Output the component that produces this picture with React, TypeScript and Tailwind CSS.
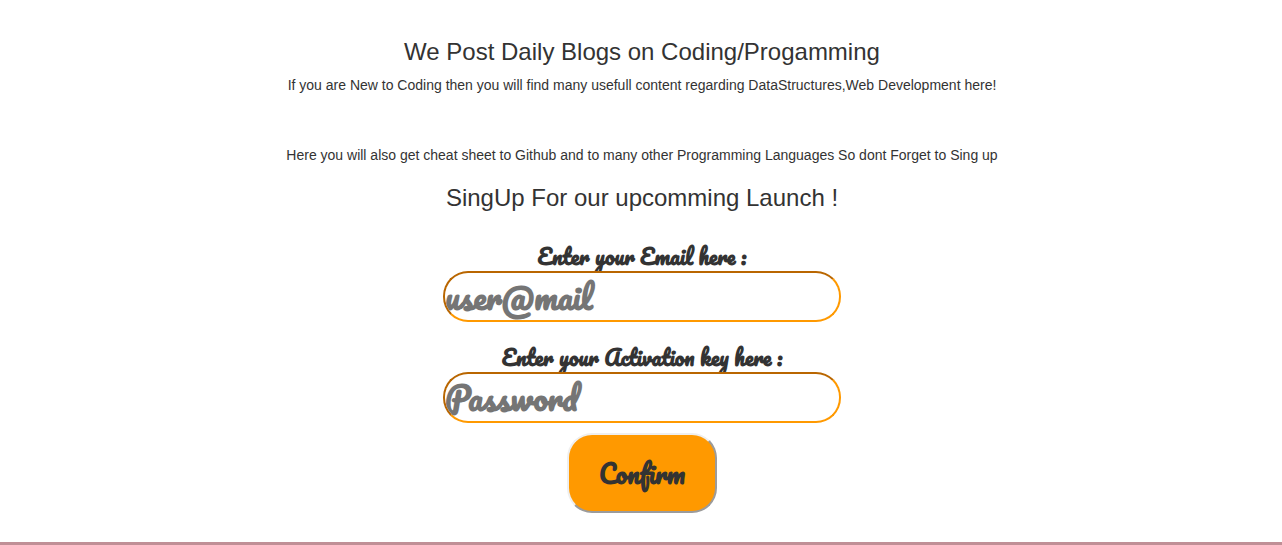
const script = "font-[Pacifico,Lato,sans-serif] font-bold";

const fieldClass =
  "h-[51px] w-full rounded-[25px] border-2 border-t-[#b96600] border-l-[#b96600] border-r-[#ff9900] border-b-[#ff9900] bg-white pb-0.5 text-[32px] text-[#333333] outline-none placeholder:text-[#757575] placeholder:opacity-100";

type FieldProps = {
  id: string;
  label: string;
  type: string;
  placeholder: string;
};

function Field({ id, label, type, placeholder }: FieldProps) {
  return (
    <div className="flex w-full flex-col items-center">
      <label htmlFor={id} className={`${script} text-[21px] leading-7`}>
        {label}
      </label>
      <input id={id} type={type} placeholder={placeholder} className={`${script} ${fieldClass}`} />
    </div>
  );
}

export default function App() {
  return (
    <div className="bg-white font-['Liberation_Sans',Arial,sans-serif] text-sm leading-5 text-[#333333]">
      <main className="flex flex-col items-center pt-[39px] pb-[29px] pl-[2px] text-center">
        <h3 className="text-2xl leading-[26px]">We Post Daily Blogs on Coding/Progamming</h3>
        <p className="mt-[10px]">
          If you are New to Coding then you will find many usefull content regarding DataStructures,Web
          Development here!
        </p>
        <p className="mt-[50px]">
          Here you will also get cheat sheet to Github and to many other Programming Languages So dont Forget
          to Sing up
        </p>
        <h3 className="mt-5 text-2xl leading-[26px]">SingUp For our upcomming Launch !</h3>
        <form
          className="mt-8 flex w-full max-w-[398px] flex-col items-center"
          onSubmit={(event) => event.preventDefault()}
        >
          <div className="flex w-full flex-col gap-[22px]">
            <Field id="email" label="Enter your Email here :" type="email" placeholder="user@mail" />
            <Field id="key" label="Enter your Activation key here :" type="password" placeholder="Password" />
          </div>
          <button
            type="submit"
            className={`${script} mt-[10px] h-20 w-[150px] rounded-[25px] border-2 border-t-[#efefef] border-l-[#efefef] border-r-[#9b9b9b] border-b-[#9b9b9b] bg-[#ff9900] text-[25px]`}
          >
            Confirm
          </button>
        </form>
      </main>
      <div className="h-[3px] bg-[#c08f96]" />
    </div>
  );
}
